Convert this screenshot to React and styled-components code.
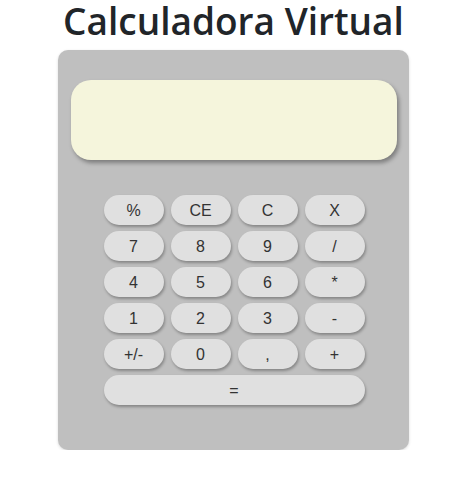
import React from "react";
import styled, { createGlobalStyle } from "styled-components";

const GlobalStyle = createGlobalStyle`
  body {
    margin: 0;
    background: #fff;
    font-family: "Liberation Sans", Arial, sans-serif;
  }
`;

const keys = [
  "%", "CE", "C", "X",
  "7", "8", "9", "/",
  "4", "5", "6", "*",
  "1", "2", "3", "-",
  "+/-", "0", ",", "+",
];

function App() {
  return (
    <Page>
      <GlobalStyle />
      <Title>Calculadora Virtual</Title>
      <Calculator>
        <Display />
        <Keypad>
          {keys.map((k) => (
            <Key key={k}>{k}</Key>
          ))}
          <Key wide>=</Key>
        </Keypad>
      </Calculator>
    </Page>
  );
}

const Page = styled.div`
  display: flex;
  flex-direction: column;
  align-items: center;
  padding-right: 6px;
`;

const Title = styled.h1`
  font-family: "Open Sans", "Noto Sans", sans-serif;
  font-weight: 600;
  font-size: 37px;
  line-height: 42px;
  color: #212529;
  margin: 0 0 8px;
`;

const Calculator = styled.div`
  width: 351px;
  height: 400px;
  box-sizing: border-box;
  background: #bfbfbf;
  border-radius: 10px;
  box-shadow: 0 1px 3px rgba(0, 0, 0, 0.15);
  padding: 30px 12px 45px 13px;
  display: flex;
  flex-direction: column;
  align-items: center;
`;

const Display = styled.div`
  align-self: stretch;
  height: 80px;
  background: #f5f5dc;
  border-radius: 20px;
  box-shadow: 2px 3px 4px rgba(0, 0, 0, 0.35);
  margin-bottom: 35px;
`;

const Keypad = styled.div`
  display: grid;
  grid-template-columns: repeat(4, 60px);
  grid-auto-rows: 30px;
  column-gap: 7px;
  row-gap: 6px;
`;

const Key = styled.button`
  grid-column: ${(p) => (p.wide ? "1 / -1" : "auto")};
  border: none;
  border-radius: 15px;
  background: #e0e0e0;
  box-shadow: 1px 2px 3px rgba(0, 0, 0, 0.3);
  font-family: "Liberation Sans", Arial, sans-serif;
  font-size: 16px;
  color: #333;
  padding: 2px 0 0;
  cursor: pointer;
`;

export default App;
